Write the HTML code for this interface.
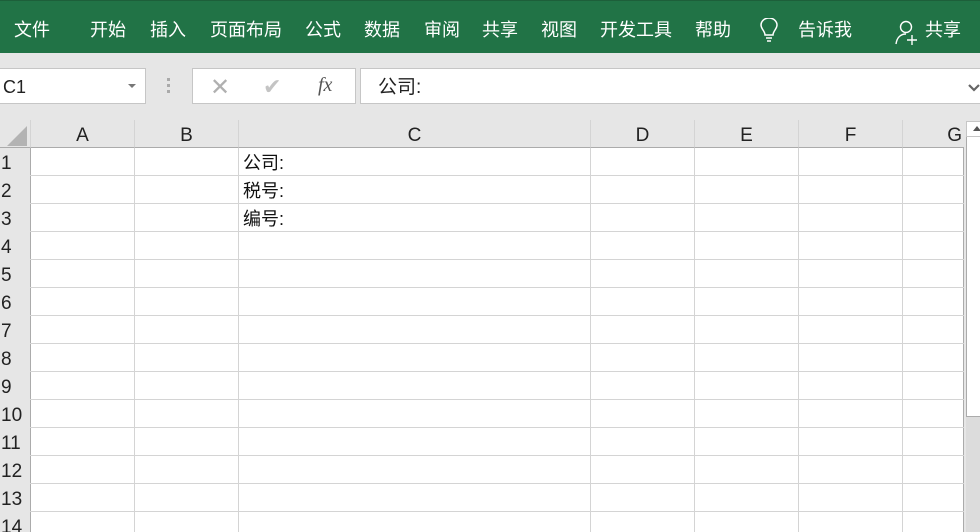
<!DOCTYPE html>
<html><head><meta charset="utf-8"><style>
*{margin:0;padding:0;box-sizing:border-box}
html,body{width:980px;height:532px;overflow:hidden}
body{background:#e6e6e6;font-family:"Liberation Sans","Noto Sans CJK SC",sans-serif;position:relative}
.rib{position:absolute;left:0;top:0;width:980px;height:53px;background:#217346;border-top:1px solid #1d5f3a}
.rib span{position:absolute;top:19px;color:#fff;font-size:18px;line-height:20px}
.box{position:absolute;background:#fff;border:1px solid #c6c6c6}
.hc{position:absolute;top:120px;height:28px;background:#e6e6e6;border-bottom:1px solid #ababab;font-size:19px;text-align:center;line-height:31px;color:#222}
.vl{position:absolute;width:1px;background:#d4d4d4}
.hl{position:absolute;height:1px;background:#d4d4d4;left:0;width:964px}
.rn{position:absolute;left:0;width:30px;font-size:19px;color:#222;line-height:31px;padding-left:1px;background:#e6e6e6}
.txt{position:absolute;left:243px;font-size:18px;color:#111;line-height:31px}
</style></head><body>
<div class="rib">
<span style="left:14px">文件</span>
<span style="left:90px">开始</span>
<span style="left:150px">插入</span>
<span style="left:210px">页面布局</span>
<span style="left:305px">公式</span>
<span style="left:364px">数据</span>
<span style="left:424px">审阅</span>
<span style="left:482px">共享</span>
<span style="left:541px">视图</span>
<span style="left:600px">开发工具</span>
<span style="left:695px">帮助</span>
<svg style="position:absolute;left:759px;top:17px" width="20" height="26" viewBox="0 0 20 26"><path d="M6 17 C6 13 2 11 2 7 A8 7 0 0 1 18 7 C18 11 14 13 14 17 Z M7 20 H13 M8 23 H12" fill="none" stroke="#fff" stroke-width="1.5"/></svg>
<span style="left:798px">告诉我</span>
<svg style="position:absolute;left:895px;top:19px" width="24" height="26" viewBox="0 0 24 26"><circle cx="11" cy="7" r="5.5" fill="none" stroke="#fff" stroke-width="1.4"/><path d="M1 24 C2 17 6 14 11 14 M12 20 H22 M17 15 V25" fill="none" stroke="#fff" stroke-width="1.4"/></svg>
<span style="left:925px">共享</span>
</div>
<div class="box" style="left:-1px;top:68px;width:147px;height:36px;font-size:18px;line-height:37px;padding-left:3px;color:#222">C1<span style="position:absolute;left:128px;top:15px;border:4px solid transparent;border-top:4px solid #777"></span></div>
<div style="position:absolute;left:167px;top:78px;width:3px;height:16px;background:repeating-linear-gradient(#aaa 0 3px,transparent 3px 6px)"></div>
<div class="box" style="left:192px;top:68px;width:164px;height:36px">
<span style="position:absolute;left:17px;top:4px;font-size:24px;color:#b0b0b0">✕</span>
<span style="position:absolute;left:70px;top:5px;font-size:22px;color:#c4c4c4">✔</span>
<span style="position:absolute;left:125px;top:5px;font-size:20px;font-style:italic;font-family:'Liberation Serif',serif;color:#555">fx</span>
</div>
<div class="box" style="left:360px;top:68px;width:625px;height:36px;font-size:19px;line-height:37px;padding-left:17px;color:#222">公司:<svg style="position:absolute;left:607px;top:15px" width="12" height="8"><path d="M1 1 L6 6 L11 1" fill="none" stroke="#666" stroke-width="2.2"/></svg></div>
<div style="position:absolute;left:0;top:148px;width:964px;height:384px;background:#fff"></div>
<div class="hc" style="left:0;width:30px"><svg style="position:absolute;left:7px;top:6px" width="20" height="20"><path d="M20 0 V20 H0 Z" fill="#b3b3b3"/></svg></div>
<div class="hc" style="left:30px;width:104px;border-left:1px solid #d4d4d4">A</div>
<div class="hc" style="left:134px;width:104px;border-left:1px solid #d4d4d4">B</div>
<div class="hc" style="left:238px;width:352px;border-left:1px solid #d4d4d4">C</div>
<div class="hc" style="left:590px;width:104px;border-left:1px solid #d4d4d4">D</div>
<div class="hc" style="left:694px;width:104px;border-left:1px solid #d4d4d4">E</div>
<div class="hc" style="left:798px;width:104px;border-left:1px solid #d4d4d4">F</div>
<div class="hc" style="left:902px;width:62px;border-left:1px solid #d4d4d4;text-align:right;padding-right:2px">G</div>
<div class="rn" style="top:148px;height:384px"></div>
<div style="position:absolute;left:30px;top:148px;width:1px;height:384px;background:#ababab"></div>
<div class="vl" style="left:134px;top:148px;height:384px"></div>
<div class="vl" style="left:238px;top:148px;height:384px"></div>
<div class="vl" style="left:590px;top:148px;height:384px"></div>
<div class="vl" style="left:694px;top:148px;height:384px"></div>
<div class="vl" style="left:798px;top:148px;height:384px"></div>
<div class="vl" style="left:902px;top:148px;height:384px"></div>
<div class="vl" style="left:963px;top:148px;height:384px;background:#ababab"></div>
<div class="hl" style="top:175px"></div><div class="hl" style="top:203px"></div><div class="hl" style="top:231px"></div><div class="hl" style="top:259px"></div><div class="hl" style="top:287px"></div><div class="hl" style="top:315px"></div><div class="hl" style="top:343px"></div><div class="hl" style="top:371px"></div><div class="hl" style="top:399px"></div><div class="hl" style="top:427px"></div><div class="hl" style="top:455px"></div><div class="hl" style="top:483px"></div><div class="hl" style="top:511px"></div>
<div class="rn" style="top:148px">1</div><div class="rn" style="top:176px">2</div><div class="rn" style="top:204px">3</div><div class="rn" style="top:232px">4</div><div class="rn" style="top:260px">5</div><div class="rn" style="top:288px">6</div><div class="rn" style="top:316px">7</div><div class="rn" style="top:344px">8</div><div class="rn" style="top:372px">9</div><div class="rn" style="top:400px">10</div><div class="rn" style="top:428px">11</div><div class="rn" style="top:456px">12</div><div class="rn" style="top:484px">13</div><div class="rn" style="top:512px">14</div>
<div class="txt" style="top:148px">公司:</div>
<div class="txt" style="top:176px">税号:</div>
<div class="txt" style="top:204px">编号:</div>
<div style="position:absolute;left:966px;top:121px;width:14px;height:411px;background:#dcdcdc"></div>
<div style="position:absolute;left:966px;top:121px;width:16px;height:296px;background:#fff;border:1px solid #ababab"></div>
<div style="position:absolute;left:966px;top:121px;width:16px;height:16px;background:#fff;border:1px solid #c6c6c6"><span style="position:absolute;left:6px;top:4px;border:4px solid transparent;border-bottom:5px solid #555;border-top:0"></span></div>
</body></html>
